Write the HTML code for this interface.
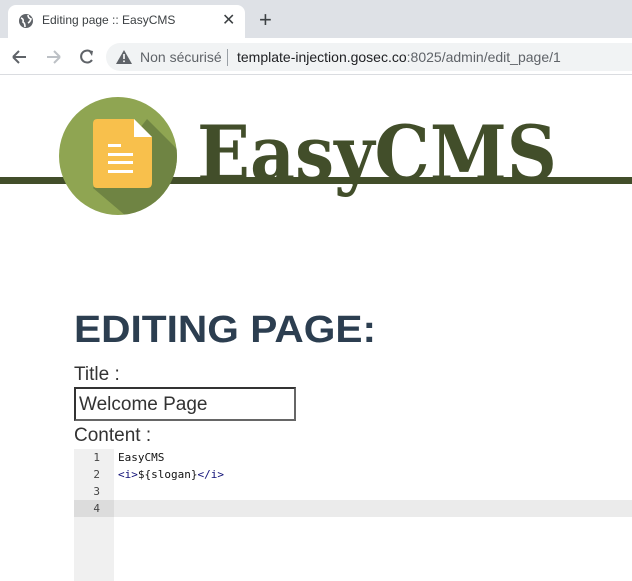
<!DOCTYPE html>
<html><head><meta charset="utf-8"><style>
*{margin:0;padding:0;box-sizing:border-box}
body{width:632px;height:581px;overflow:hidden;background:#fff;font-family:"Liberation Sans",sans-serif;position:relative}
.abs{position:absolute}
</style></head><body>
<div class="abs" style="left:0;top:0;width:632px;height:38px;background:#dee1e6"></div>
<div class="abs" style="left:8px;top:5px;width:237px;height:34px;background:#fff;border-radius:8px 8px 0 0"></div>
<svg class="abs" style="left:18px;top:13px" width="16" height="16" viewBox="0 0 16 16"><circle cx="8" cy="8" r="7" fill="#5f6368"/><path d="M3 5 Q6 6 5 9 Q7 10 7 14 M10 2 Q10 5 13 6 Q12 9 10 10" stroke="#fff" stroke-width="1.6" fill="none"/></svg>
<div class="abs" style="left:42px;top:13px;font-size:12px;color:#3c4043">Editing page :: EasyCMS</div>
<div class="abs" style="left:222px;top:10px;font-size:16px;color:#3c4043">✕</div>
<div class="abs" style="left:259px;top:7px;font-size:22px;color:#3c4043">+</div>
<svg class="abs" style="left:10px;top:48px" width="100" height="18" viewBox="0 0 100 18"><path d="M3 9H16M3 9L9 3M3 9L9 15" stroke="#5f6368" stroke-width="2" fill="none"/><path d="M37 9H50M50 9L44 3M50 9L44 15" stroke="#bdc1c6" stroke-width="2" fill="none"/><path d="M81 4A6 6 0 1 0 82 12" stroke="#5f6368" stroke-width="2" fill="none"/><path d="M78 2L83 3L82 8Z" fill="#5f6368"/></svg>
<div class="abs" style="left:106px;top:43px;width:540px;height:28px;background:#f1f3f4;border-radius:14px"></div>
<svg class="abs" style="left:116px;top:50px" width="16" height="14" viewBox="0 0 16 14"><path d="M8 0L16 14H0Z" fill="#5f6368"/><rect x="7.2" y="4" width="1.6" height="5" fill="#fff"/><rect x="7.2" y="10.5" width="1.6" height="1.6" fill="#fff"/></svg>
<div class="abs" style="left:140px;top:49px;font-size:14px;color:#5f6368">Non sécurisé</div>
<div class="abs" style="left:227px;top:49px;width:1px;height:17px;background:#9aa0a6"></div>
<div class="abs" style="left:237px;top:49px;font-size:14px;color:#202124">template-injection.gosec.co<span style="color:#5f6368">:8025/admin/edit_page/1</span></div>
<div class="abs" style="left:0;top:74px;width:632px;height:1px;background:#dadce0"></div>

<div class="abs" style="left:0;top:177px;width:632px;height:7px;background:#424e2a"></div>
<svg class="abs" style="left:59px;top:97px" width="118" height="118" viewBox="0 0 118 118">
<defs><clipPath id="c"><circle cx="59" cy="59" r="59"/></clipPath></defs>
<circle cx="59" cy="59" r="59" fill="#8fa552"/>
<path d="M34 91 L88 22 L130 64 L80 130 Z" fill="#6f8443" clip-path="url(#c)"/>
<path d="M38 22H75L93 40V86Q93 91 88 91H38Q34 91 34 86V27Q34 22 38 22Z" fill="#f8c04c"/>
<path d="M75 22V40H93Z" fill="#fff"/>
<rect x="49" y="47" width="13" height="3" fill="#fff"/>
<rect x="49" y="56" width="25" height="3" fill="#fff"/>
<rect x="49" y="64" width="25" height="3" fill="#fff"/>
<rect x="49" y="73" width="25" height="3" fill="#fff"/>
</svg>
<svg class="abs" style="left:195px;top:100px" width="370" height="110"><text x="2" y="80" font-family="DejaVu Serif, Liberation Serif, serif" font-weight="bold" font-size="76" fill="#424e2a" textLength="360" lengthAdjust="spacingAndGlyphs">EasyCMS</text></svg>

<svg class="abs" style="left:72px;top:300px" width="320" height="50"><text x="2" y="42" font-family="Liberation Sans, sans-serif" font-weight="bold" font-size="38" fill="#2c3e50" textLength="302" lengthAdjust="spacingAndGlyphs">EDITING PAGE:</text></svg>
<div class="abs" style="left:74px;top:364px;font-size:19px;color:#333">Title :</div>
<div class="abs" style="left:74px;top:387px;width:222px;height:34px;border:2px solid #333;border-right-color:#666;border-bottom-color:#666;font-size:19px;color:#333;padding:5px 3px">Welcome Page</div>
<div class="abs" style="left:74px;top:425px;font-size:19px;color:#333">Content :</div>
<div class="abs" style="left:74px;top:449px;width:40px;height:132px;background:#f0f0f0"></div>
<div class="abs" style="left:74px;top:500px;width:558px;height:17px;background:#ebebeb"></div>
<div class="abs" style="left:74px;top:500px;width:40px;height:17px;background:#dcdcdc"></div>
<div class="abs" style="left:74px;top:449px;width:26px;font:11px/17px 'DejaVu Sans Mono','Liberation Mono',monospace;color:#444;text-align:right">1<br>2<br>3<br>4</div>
<div class="abs" style="left:118px;top:449px;font:11px/17px 'DejaVu Sans Mono','Liberation Mono',monospace;color:#111;white-space:pre">EasyCMS
<span style="color:#117">&lt;i&gt;</span>${slogan}<span style="color:#117">&lt;/i&gt;</span></div>
</body></html>
